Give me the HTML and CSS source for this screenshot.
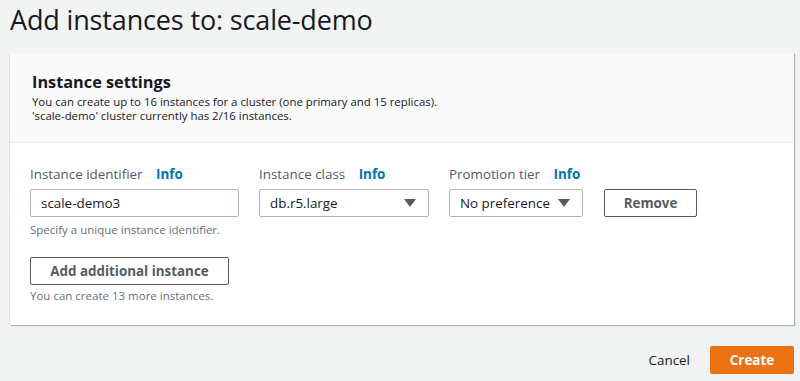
FILE: index.html
```html
<!DOCTYPE html>
<html lang="en">
<head>
  <meta charset="UTF-8">
  <meta name="viewport" content="width=device-width, initial-scale=1.0">
  <title>Add instances</title>
  <link rel="stylesheet" href="styles.css">
</head>
<body>
  <h1 class="page-title">Add instances to: scale-demo</h1>

  <div class="card">
    <div class="card-header">
      <h2>Instance settings</h2>
      <p>You can create up to 16 instances for a cluster (one primary and 15 replicas).<br>
      'scale-demo' cluster currently has 2/16 instances.</p>
    </div>

    <div class="card-body">
      <div class="row">
        <div class="field field-id">
          <label for="ident">Instance identifier <a href="#" class="info">Info</a></label>
          <input type="text" id="ident" value="scale-demo3">
          <span class="hint">Specify a unique instance identifier.</span>
        </div>
        <div class="field field-class">
          <label>Instance class <a href="#" class="info">Info</a></label>
          <div class="select">
            <span>db.r5.large</span>
            <svg width="12" height="8" viewBox="0 0 12 8"><path d="M0 0h12L6 8z" fill="#545b64"/></svg>
          </div>
        </div>
        <div class="field field-tier">
          <label>Promotion tier <a href="#" class="info">Info</a></label>
          <div class="select">
            <span>No preference</span>
            <svg width="12" height="8" viewBox="0 0 12 8"><path d="M0 0h12L6 8z" fill="#545b64"/></svg>
          </div>
        </div>
        <div class="field field-btn">
          <button class="btn">Remove</button>
        </div>
      </div>

      <button class="btn btn-add">Add additional instance</button>
      <span class="hint">You can create 13 more instances.</span>
    </div>
  </div>

  <div class="actions">
    <a href="#" class="cancel">Cancel</a>
    <button class="btn-primary">Create</button>
  </div>
</body>
</html>
```

FILE: styles.css
```css
/* Consola: añadir instancias */
body {
  margin: 0;
  background: #f2f3f3;
  font-family: "Open Sans", "Noto Sans", sans-serif;
  color: #16191f;
}

.page-title {
  margin: 0;
  padding: 2px 0 0 10px;
  height: 53px;
  box-sizing: border-box;
  font-size: 27px;
  font-weight: 400;
  line-height: 36px;
  letter-spacing: -0.15px;
}

.card {
  margin: 0 6px 0 10px;
  background: #fff;
  box-shadow: 1px 1px 1px 0 rgba(0, 28, 36, 0.3), -1px 0 0 0 rgba(0, 28, 36, 0.08);
}

.card-header {
  background: #fafafa;
  border-bottom: 1px solid #eaeded;
  padding: 17px 22px 0;
  height: 90px;
  box-sizing: border-box;
}

.card-header h2 {
  margin: 0;
  font-size: 16.3px;
  font-weight: 700;
  line-height: 24px;
}

.card-header p {
  margin: 1px 0 0;
  font-size: 11.4px;
  line-height: 14px;
  color: #16191f;
}

.card-body {
  padding: 21px 20px 0;
  height: 182px;
  box-sizing: border-box;
}

.row {
  display: flex;
  gap: 20px;
}

.field {
  display: flex;
  flex-direction: column;
}

.field-id { width: 209px; }
.field-class { width: 170px; }
.field-tier { width: 134px; margin-right: 1px; }
.field-btn { padding-top: 25px; }

label {
  font-size: 13.4px;
  line-height: 20px;
  color: #545b64;
  margin-bottom: 5px;
  white-space: nowrap;
}

.info {
  color: #0073bb;
  font-weight: 700;
  text-decoration: none;
  margin-left: 10px;
}

input, .select {
  height: 28px;
  box-sizing: border-box;
  border: 1px solid #aab7b8;
  border-radius: 2px;
  font-family: inherit;
  font-size: 13.4px;
  color: #16191f;
  padding: 0 10px;
  background: #fff;
}

.select {
  display: flex;
  align-items: center;
  justify-content: space-between;
  padding-right: 12px;
}

.hint {
  display: block;
  font-size: 11.5px;
  line-height: 14px;
  color: #687078;
  margin-top: 6px;
}

.btn {
  height: 28px;
  box-sizing: border-box;
  border: 1px solid #545b64;
  border-radius: 2px;
  background: #fff;
  color: #545b64;
  font-family: inherit;
  font-size: 13.4px;
  font-weight: 700;
  padding: 0 10px;
  white-space: nowrap;
}

.field-btn .btn { width: 93px; }

.btn-add {
  width: 199px;
  margin-top: 20px;
}

.card-body > .hint {
  margin-top: 4px;
}

.actions {
  display: flex;
  justify-content: flex-end;
  align-items: center;
  gap: 20px;
  padding: 21px 6px 0 0;
}

.cancel {
  color: #16191f;
  text-decoration: none;
  font-size: 13.4px;
  font-weight: 400;
}

.btn-primary {
  width: 84px;
  height: 28px;
  border: none;
  border-radius: 2px;
  background: #ec7211;
  color: #fff;
  font-family: inherit;
  font-size: 13.4px;
  font-weight: 700;
}
```
